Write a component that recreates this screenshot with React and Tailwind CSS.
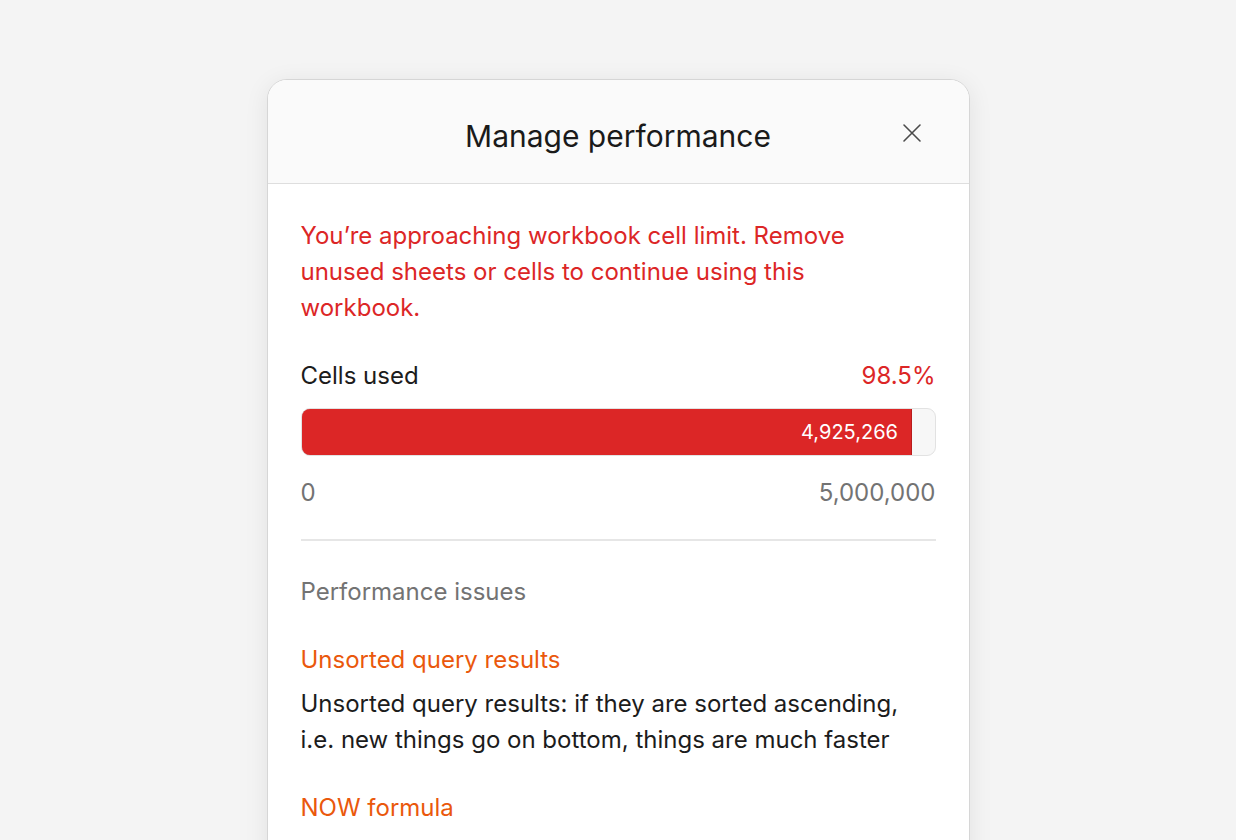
import React from "react";

const font = { fontFamily: "Inter, 'Liberation Sans', sans-serif" };

const CloseIcon = () => (
  <svg width="22" height="22" viewBox="0 0 22 22" fill="none" stroke="#4b4b4b" strokeWidth="1.6" strokeLinecap="round">
    <path d="M3 3 L19 19 M19 3 L3 19" />
  </svg>
);

const UsageBar = ({ used, fill }) => (
  <div className="h-[48px] w-full rounded-[9px] border border-[#e2e2e2] bg-[#f7f7f7] overflow-hidden">
    <div
      className="h-[48px] bg-[#dc2626] border border-[#b91c1c] rounded-l-[9px] -m-px flex items-center justify-end pr-[13px] text-white text-[20px]"
      style={{ width: `${fill}%` }}
    >
      {used.toLocaleString("en-US")}
    </div>
  </div>
);

const Issue = ({ title, children }) => (
  <div className="flex flex-col gap-[8px]">
    <div className="text-[#ea580c]">{title}</div>
    {children && <div className="text-[#1c1c1c]">{children}</div>}
  </div>
);

export default function App() {
  return (
    <div className="min-h-screen bg-[#f4f4f4] pt-[79px] flex justify-center" style={font}>
      <div className="w-[703px] h-[800px] bg-white rounded-t-[20px] border border-[#d6d6d6] shadow-[0_4px_24px_rgba(0,0,0,0.08)] overflow-hidden">
        <div className="relative h-[104px] bg-[#fafafa] border-b border-[#dedede] flex items-center justify-center pt-[10px]">
          <h1 className="text-[30px] text-[#1a1a1a]">Manage performance</h1>
          <button className="absolute right-[46px] top-[42px]">
            <CloseIcon />
          </button>
        </div>
        <div className="px-[33px] pt-[34px] text-[24px] leading-[36px]">
          <p className="text-[#dc2626] pr-[40px]">
            You’re approaching workbook cell limit. Remove unused sheets or cells to continue using this workbook.
          </p>
          <div className="mt-[32px] flex justify-between">
            <span className="text-[#1c1c1c]">Cells used</span>
            <span className="text-[#dc2626]">98.5%</span>
          </div>
          <div className="mt-[14px]">
            <UsageBar used={4925266} fill={96.6} />
          </div>
          <div className="mt-[19px] flex justify-between text-[#737373]">
            <span>0</span>
            <span>5,000,000</span>
          </div>
          <div className="mt-[28px] border-t-2 border-[#e6e6e6]" />
          <div className="mt-[33px] text-[#737373]">Performance issues</div>
          <div className="mt-[32px] flex flex-col gap-[32px]">
            <Issue title="Unsorted query results">
              Unsorted query results: if they are sorted ascending, i.e. new things go on bottom, things are much faster
            </Issue>
            <Issue title="NOW formula" />
          </div>
        </div>
      </div>
    </div>
  );
}
